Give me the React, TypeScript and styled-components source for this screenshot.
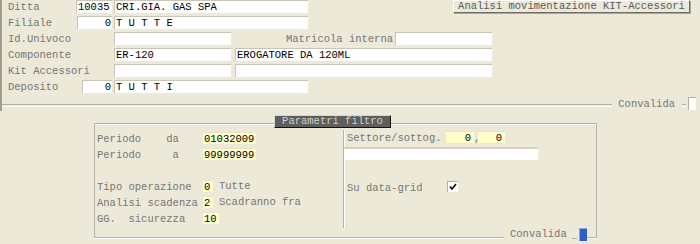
import React from 'react';
import styled, { createGlobalStyle } from 'styled-components';

const GlobalStyle = createGlobalStyle`
  html, body {
    margin: 0;
    padding: 0;
    background: #ece9d8;
  }
  body {
    width: 700px;
    height: 244px;
    overflow: hidden;
    font-family: "Liberation Mono", "Courier New", monospace;
    font-size: 10.5px;
    color: #000;
  }
`;

const Page = styled.div`
  width: 700px;
  height: 244px;
  display: flex;
  flex-direction: column;
`;

const TopPanel = styled.div`
  display: flex;
  flex-direction: column;
  border-left: 2px solid #a19d8f;
  padding-left: 6px;
`;

const Row = styled.div<{ $h?: number }>`
  display: flex;
  align-items: flex-start;
  height: ${({ $h }) => $h ?? 16}px;
  white-space: pre;
`;

const Label = styled.div<{ $w: number; $right?: boolean }>`
  flex: none;
  width: ${({ $w }) => $w}px;
  height: 13px;
  line-height: 14px;
  color: #767676;
  text-align: ${({ $right }) => ($right ? 'right' : 'left')};
  padding-right: ${({ $right }) => ($right ? 2 : 0)}px;
  box-sizing: border-box;
`;

const Slot = styled.div`
  flex: none;
  width: 38px;
  display: flex;
  justify-content: flex-end;
  padding-right: 2px;
  box-sizing: border-box;
`;

const Field = styled.div<{ $w: number; $right?: boolean; $gap?: number }>`
  flex: none;
  width: ${({ $w }) => $w}px;
  height: 13px;
  line-height: 13px;
  margin-left: ${({ $gap }) => $gap ?? 0}px;
  background: #fff;
  border-top: 1px solid #c9c6b8;
  border-left: 1px solid #c9c6b8;
  box-sizing: border-box;
  padding: 0 1px;
  text-align: ${({ $right }) => ($right ? 'right' : 'left')};
  overflow: hidden;
`;

const ActionButton = styled.button`
  margin-left: auto;
  margin-right: 10px;
  width: 237px;
  height: 13px;
  padding: 0;
  font: inherit;
  line-height: 11px;
  color: #5a5a5a;
  background: #ece9d8;
  border: 1px solid;
  border-color: #fff #6f6d66 #6f6d66 #fff;
  box-shadow: 1px 1px 0 #a9a699;
  white-space: pre;
  cursor: pointer;
`;

const Groove = styled.div<{ $w?: number }>`
  flex: ${({ $w }) => ($w ? 'none' : '1')};
  width: ${({ $w }) => ($w ? `${$w}px` : 'auto')};
  height: 1px;
  border-top: 1px solid #b5b2a4;
  border-bottom: 1px solid #fff;
`;

const ConvalidaBar = styled.div`
  display: flex;
  align-items: center;
  height: 15px;
  margin-left: -6px;
  padding-right: 4px;
  white-space: pre;

  & > ${Groove} {
    margin-top: 3px;
  }
`;

const BarText = styled.span<{ $ml: number; $mr: number }>`
  color: #767676;
  margin-left: ${({ $ml }) => $ml}px;
  margin-right: ${({ $mr }) => $mr}px;
`;

const CheckSquare = styled.div<{ $blue?: boolean }>`
  flex: none;
  width: 8px;
  height: 13px;
  margin-left: 2px;
  box-sizing: border-box;
  background: ${({ $blue }) => ($blue ? '#2e5fc7' : '#fff')};
  border-left: 1px solid ${({ $blue }) => ($blue ? '#8aa6dd' : '#b5b2a4')};
  border-top: 1px solid ${({ $blue }) => ($blue ? '#8aa6dd' : '#b5b2a4')};
`;

const Frame = styled.div`
  margin: 4px 0 0 94px;
  width: 503px;
  display: flex;
  flex-direction: column;
`;

const FrameHead = styled.div`
  display: flex;
  height: 13px;
`;

const CornerLine = styled.div<{ $side: 'left' | 'right'; $pos: 'top' | 'bottom'; $w?: number }>`
  flex: ${({ $w }) => ($w ? 'none' : '1')};
  width: ${({ $w }) => ($w ? `${$w}px` : 'auto')};
  box-sizing: border-box;
  align-self: ${({ $pos }) => ($pos === 'top' ? 'flex-end' : 'flex-start')};
  height: ${({ $pos }) => ($pos === 'top' ? 5 : 10)}px;
  ${({ $pos }) => ($pos === 'top' ? 'border-top' : 'border-bottom')}: 1px solid #b5b2a4;
  border-${({ $side }) => $side}: 1px solid #b5b2a4;
  box-shadow: ${({ $pos }) => ($pos === 'top' ? 'inset 0 1px 0 #fff' : '0 1px 0 #fff')};
`;

const Legend = styled.div`
  flex: none;
  width: 117px;
  height: 13px;
  box-sizing: border-box;
  background: #5e5e5e;
  color: #cfcfcf;
  border: 1px solid;
  border-color: #d8d6cc #111 #111 #d8d6cc;
  line-height: 11px;
  text-align: center;
  white-space: pre;
`;

const FrameBody = styled.div`
  display: grid;
  grid-template-columns: 248px 1fr;
  height: 100px;
  border-left: 1px solid #b5b2a4;
  border-right: 1px solid #b5b2a4;
`;

const LeftCol = styled.div`
  display: flex;
  flex-direction: column;
  padding: 4px 0 0 2px;
`;

const RightCol = styled.div`
  display: flex;
  flex-direction: column;
  margin-top: 2px;
  padding-top: 1px;
  border-left: 1px solid #b5b2a4;
  box-shadow: inset 1px 0 0 #fff;
`;

const Pad = styled.div<{ $h: number }>`
  height: ${({ $h }) => $h}px;
`;

const Yellow = styled.div<{ $w: number; $right?: boolean }>`
  flex: none;
  width: ${({ $w }) => $w}px;
  height: 12px;
  line-height: 12px;
  background: #ffffcc;
  border-top: 1px solid #e6e2c4;
  box-sizing: border-box;
  padding: 0 1px;
  text-align: ${({ $right }) => ($right ? 'right' : 'left')};
  padding-right: ${({ $right }) => ($right ? 3 : 1)}px;
`;

const Hint = styled.span`
  color: #767676;
  line-height: 12px;
  margin-left: 6px;
`;

const Comma = styled.span`
  width: 4px;
  line-height: 14px;
  color: #767676;
  overflow: visible;
`;

const RightRow = styled(Row)`
  padding-left: 3px;
`;

const WideField = styled(Field)`
  border-left: none;
  border-top: 2px solid #d4d0c8;
`;

const Tick = styled.div`
  flex: none;
  width: 11px;
  height: 11px;
  box-sizing: border-box;
  background: #fff;
  border-top: 1px solid #b5b2a4;
  border-left: 1px solid #b5b2a4;
  display: flex;
  align-items: center;
  justify-content: center;
`;

const FrameFoot = styled.div`
  display: flex;
  height: 13px;
  white-space: pre;
`;

const FootText = styled.span`
  color: #767676;
  line-height: 13px;
  margin: 0 5px 0 6px;
`;

const FootSeg = styled.div`
  flex: none;
  width: 5px;
  height: 1px;
  margin-top: 9px;
  border-bottom: 1px solid #b5b2a4;
`;

export default function App() {
  return (
    <>
      <GlobalStyle />
      <Page>
        <TopPanel>
          <Row>
            <Label $w={68}>Ditta</Label>
            <Slot>
              <Field $w={36}>10035</Field>
            </Slot>
            <Field $w={194}>CRI.GIA. GAS SPA</Field>
            <ActionButton>Analisi movimentazione KIT-Accessori</ActionButton>
          </Row>
          <Row>
            <Label $w={68}>Filiale</Label>
            <Slot>
              <Field $w={35} $right>0</Field>
            </Slot>
            <Field $w={194}>T U T T E</Field>
          </Row>
          <Row>
            <Label $w={68}>Id.Univoco</Label>
            <Slot />
            <Field $w={117} />
            <Label $w={164} $right>Matricola interna</Label>
            <Field $w={97} />
          </Row>
          <Row>
            <Label $w={68}>Componente</Label>
            <Slot />
            <Field $w={117}>ER-120</Field>
            <Field $w={257} $gap={4}>EROGATORE DA 120ML</Field>
          </Row>
          <Row>
            <Label $w={68}>Kit Accessori</Label>
            <Slot />
            <Field $w={117} />
            <Field $w={257} $gap={4} />
          </Row>
          <Row>
            <Label $w={68}>Deposito</Label>
            <Slot>
              <Field $w={30} $right>0</Field>
            </Slot>
            <Field $w={194}>T U T T I</Field>
          </Row>
          <ConvalidaBar>
            <Groove />
            <BarText $ml={6} $mr={7}>Convalida</BarText>
            <Groove $w={4} />
            <CheckSquare />
          </ConvalidaBar>
        </TopPanel>

        <Frame>
          <FrameHead>
            <CornerLine $side="left" $pos="top" $w={180} />
            <Legend>Parametri filtro</Legend>
            <CornerLine $side="right" $pos="top" />
          </FrameHead>
          <FrameBody>
            <LeftCol>
              <Row>
                <Label $w={106}>Periodo    da</Label>
                <Yellow $w={53}>01032009</Yellow>
              </Row>
              <Row>
                <Label $w={106}>Periodo     a</Label>
                <Yellow $w={53}>99999999</Yellow>
              </Row>
              <Row />
              <Row>
                <Label $w={106}>Tipo operazione</Label>
                <Yellow $w={10}>0</Yellow>
                <Hint>Tutte</Hint>
              </Row>
              <Row>
                <Label $w={106}>Analisi scadenza</Label>
                <Yellow $w={10}>2</Yellow>
                <Hint>Scadranno fra</Hint>
              </Row>
              <Row>
                <Label $w={106}>GG.  sicurezza</Label>
                <Yellow $w={16}>10</Yellow>
              </Row>
            </LeftCol>
            <RightCol>
              <RightRow>
                <Label $w={99}>Settore/sottog.</Label>
                <Yellow $w={28} $right>0</Yellow>
                <Comma>,</Comma>
                <Yellow $w={27} $right>0</Yellow>
              </RightRow>
              <WideField $w={194} />
              <Pad $h={21} />
              <RightRow>
                <Label $w={100}>Su data-grid</Label>
                <Tick>
                  <svg width="8" height="8" viewBox="0 0 8 8">
                    <path d="M1 3.5 L3 6 L7 1" fill="none" stroke="#000" strokeWidth="1.6" />
                  </svg>
                </Tick>
              </RightRow>
            </RightCol>
          </FrameBody>
          <FrameFoot>
            <CornerLine $side="left" $pos="bottom" $w={410} />
            <FootText>Convalida</FootText>
            <FootSeg />
            <CheckSquare $blue />
            <CornerLine $side="right" $pos="bottom" />
          </FrameFoot>
        </Frame>
      </Page>
    </>
  );
}
